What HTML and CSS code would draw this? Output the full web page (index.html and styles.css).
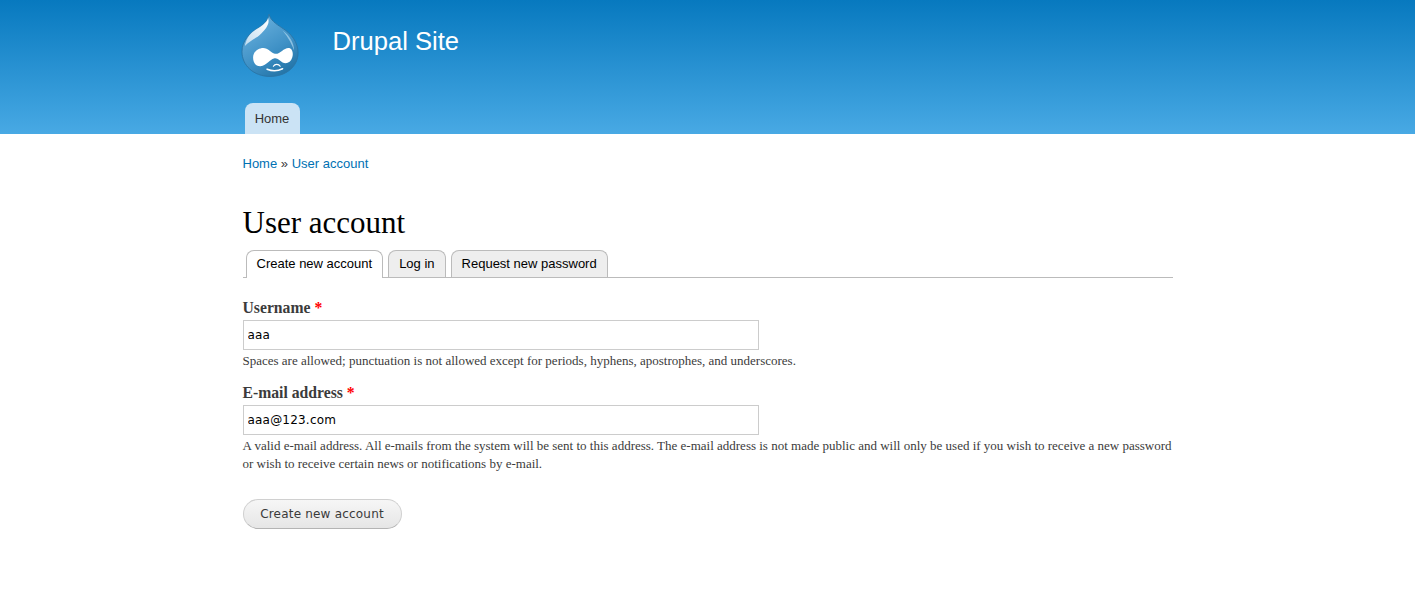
FILE: index.html
```html
<!DOCTYPE html>
<html lang="en">
<head>
<meta charset="utf-8">
<title>User account | Drupal Site</title>
<link rel="stylesheet" href="styles.css">
</head>
<body>
<header class="site-header">
  <div class="wrap">
    <div class="branding">
      <a class="logo" href="#">
        <svg width="58" height="64" viewBox="0 0 60 66" aria-label="Home">
          <defs>
            <linearGradient id="drop" x1="0.25" y1="0.1" x2="0.75" y2="1">
              <stop offset="0" stop-color="#66aedb"/>
              <stop offset="0.55" stop-color="#3f91c6"/>
              <stop offset="1" stop-color="#2273a6"/>
            </linearGradient>
            <linearGradient id="shine" x1="1" y1="0" x2="0" y2="1">
              <stop offset="0" stop-color="#fff"/>
              <stop offset="1" stop-color="#bfdcf0"/>
            </linearGradient>
          </defs>
          <path d="M29 1C30 7 36 11 42 15C52 21 59 30 59 41C59 55 47 65.500 30 65.500C13 65.500 1 54 1 40C1 28 9 21 17 16C23 12 28 8 29 1Z" fill="url(#drop)" stroke="#2a75a6" stroke-width="1"/>
          <path d="M28 5C27 10 20 14 14 18C8 22 5 28 4 34C9 28 15 27 21 21C26 16 30 11 28 5Z" fill="url(#shine)"/>
          <path d="M43 18C50 23 55 31 55 39C53 33 49 25 43 18Z" fill="#a5d2ec" opacity="0.75"/>
          <path d="M23 36C28 36 31 41 35 42C40 43 44 36 49 36C53 36 54.500 41 53 46C51.500 51 47 53 43 51C39.500 49 38 46 34 47C30 48 27 54 20 55C15 55 12.500 51 12.500 46C12.500 40 18 36 23 36Z" fill="#fff"/>
          <path d="M27 58C32 60 38 60 43 57.500" fill="none" stroke="#fff" stroke-width="1.600" stroke-linecap="round"/>
          <path d="M33.500 55C35 52.500 39 52.500 40.500 55" fill="none" stroke="#fff" stroke-width="1.200" stroke-linecap="round"/>
        </svg>
      </a>
      <a class="site-name" href="#">Drupal Site</a>
    </div>
    <nav class="main-menu"><a class="main-tab" href="#">Home</a></nav>
  </div>
</header>
<main class="wrap content">
  <div class="breadcrumb"><a href="#">Home</a> » <a href="#">User account</a></div>
  <h1 class="title">User account</h1>
  <ul class="tabs">
    <li class="tab active"><a href="#">Create new account</a></li>
    <li class="tab"><a href="#">Log in</a></li>
    <li class="tab"><a href="#">Request new password</a></li>
  </ul>
  <form class="account-form">
    <div class="field">
      <label class="field-label" for="u">Username <span class="req">*</span></label>
      <input class="text-input" id="u" type="text" value="aaa">
      <div class="desc">Spaces are allowed; punctuation is not allowed except for periods, hyphens, apostrophes, and underscores.</div>
    </div>
    <div class="field">
      <label class="field-label" for="e">E-mail address <span class="req">*</span></label>
      <input class="text-input" id="e" type="text" value="aaa@123.com">
      <div class="desc">A valid e-mail address. All e-mails from the system will be sent to this address. The e-mail address is not made public and will only be used if you wish to receive a new password or wish to receive certain news or notifications by e-mail.</div>
    </div>
    <div class="actions"><button class="submit" type="button">Create new account</button></div>
  </form>
</main>
</body>
</html>
```
FILE: styles.css
```css
* { box-sizing: border-box; }
html, body { margin: 0; padding: 0; }
body {
  background: #fff;
  color: #3b3b3b;
  font-family: "Liberation Serif", serif;
  font-size: 14px;
}
a { text-decoration: none; color: #0071b3; }
.wrap { width: 930px; margin: 0 auto; }
.site-header {
  height: 134px;
  background: linear-gradient(to bottom, #0779bf 0%, #48a9e4 100%);
}
.branding { display: flex; align-items: flex-start; height: 103px; padding-top: 13px; }
.logo { display: block; width: 60px; height: 66px; margin-left: -2px; }
.site-name {
  margin: 12px 0 0 32px;
  color: #fff;
  font: 25.6px/32px "Liberation Sans", sans-serif;
}
.main-menu { display: flex; padding-left: 2px; }
.main-tab {
  display: block;
  height: 31px;
  width: 55px;
  text-align: center;
  background: #cbe3f5;
  border-radius: 8px 8px 0 0;
  color: #333;
  font: 13px/31px "Liberation Sans", sans-serif;
}
.breadcrumb {
  padding-top: 22px;
  font: 13px/15px "Liberation Sans", sans-serif;
  color: #3b3b3b;
}
.title {
  margin: 34px 0 0;
  color: #000;
  font: 400 31px/36px "Liberation Serif", serif;
}
.tabs {
  list-style: none;
  display: flex;
  gap: 5px;
  margin: 9px 0 0;
  padding: 0 0 0 3px;
  border-bottom: 1px solid #bbb;
  height: 28px;
}
.tab {
  height: 27px;
  background: #eee;
  border: 1px solid #bbb;
  border-bottom: 0;
  border-radius: 8px 8px 0 0;
  padding: 0 10px;
  font: 13px/26px "Liberation Sans", sans-serif;
}
.tab a { color: #000; }
.tab.active { background: #fff; height: 28px; }
.account-form { margin-top: 20px; }
.field { margin-bottom: 13px; }
.field-label {
  display: block;
  font-weight: 700;
  font-size: 15.700px;
  line-height: 20px;
  color: #3b3b3b;
}
.req { color: #f00; }
.text-input {
  display: block;
  width: 516px;
  height: 30px;
  margin-top: 2px;
  padding: 0 4px;
  border: 1px solid #ccc;
  border-radius: 0;
  color: #000;
  font: 12px "DejaVu Sans", sans-serif;
  letter-spacing: 0.2px;
  outline: 0;
}
.desc {
  margin-top: 2px;
  font-size: 13px;
  line-height: 18px;
  color: #3b3b3b;
}
.actions { margin-top: 26px; }
.submit {
  width: 159px;
  height: 30px;
  padding: 0;
  background: linear-gradient(to bottom, #f6f6f6, #e6e6e6);
  border: 1px solid #d0d0d0;
  border-bottom-color: #b4b4b4;
  border-radius: 15px;
  color: #3a3a3a;
  font: 12px "DejaVu Sans", sans-serif;
  letter-spacing: 0.2px;
}
```
